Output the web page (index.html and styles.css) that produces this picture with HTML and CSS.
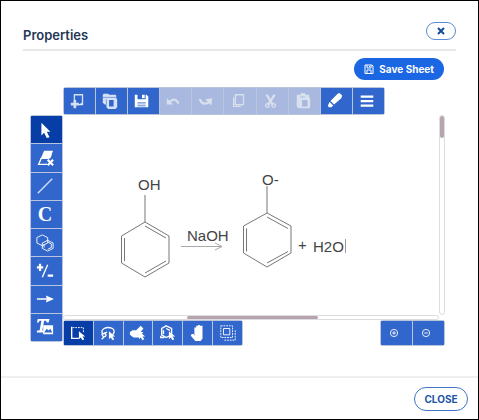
FILE: index.html
```html
<!DOCTYPE html>
<html lang="en">
<head>
<meta charset="utf-8">
<meta name="viewport" content="width=device-width, initial-scale=1">
<title>Properties</title>
<link rel="stylesheet" href="styles.css">
</head>
<body>
<section class="dialog" role="dialog" aria-labelledby="title">
  <header class="header">
    <h1 class="title" id="title">Properties</h1>
    <button class="dismiss" type="button" aria-label="Dismiss"><svg viewBox="0 0 8 8"><path d="M1 1l6 6M7 1L1 7"/></svg></button>
  </header>
  <main class="content">
    <div class="actions">
      <button class="save" type="button">
        <svg viewBox="0 0 10 10"><path d="M1 1h7l1 1v7.500H1zM3 1v3h4V1M3 9V6h4v3M5.500 2v1"/></svg>
        Save Sheet
      </button>
    </div>
    <div class="editor">
      <div class="bar top-bar">
        <button type="button" aria-label="New"><svg viewBox="0 0 20 20"><path class="line soft" d="M6 9V3h9v11h-4"/><path class="fill soft" d="M10.500 14h4v-2zM5 9h3v3h3v3H8v3H5v-3H2v-3h3z"/></svg></button>
        <button type="button" aria-label="Open"><svg viewBox="0 0 20 20"><path class="fill soft" d="M2 3l1-1h5l1 1h7l1 1v3l1 1v9l-2 2H8l-2-2v-3H4l-2-2z"/><path class="cut" d="M9 9h5v7H9z"/><path class="crease" d="M2 6h15M6 8v6"/></svg></button>
        <button type="button" aria-label="Save"><svg viewBox="0 0 20 20"><path class="fill" d="M2 3h3v5h9V3h1l2 2v12H2z"/><path class="fill" d="M10 3h3v4h-3z"/><path class="tint" d="M5 11h9v5H5z"/><path class="thin" d="M5 13.500h9"/></svg></button>
        <button type="button" aria-label="Undo" disabled><svg viewBox="0 0 20 20"><path class="thick" d="M5 11c4-4 8-3 10 2"/><path class="fill" d="M2 7v7h7z"/></svg></button>
        <button type="button" aria-label="Redo" disabled><svg viewBox="0 0 20 20"><path class="thick" d="M3 8c2 6 7 6 11 3"/><path class="fill" d="M9 8l8-1-1 8z"/></svg></button>
        <button type="button" aria-label="Copy" disabled><svg viewBox="0 0 20 20"><path class="line" d="M6 3h9v11H6zM4 6v10h8"/></svg></button>
        <button type="button" aria-label="Cut" disabled><svg viewBox="0 0 20 20"><path class="thick" d="M5 3l7 11M14 3L7 14"/><circle class="line" cx="6" cy="15" r="2"/><circle class="line" cx="13" cy="15" r="2"/></svg></button>
        <button type="button" aria-label="Paste" disabled><svg viewBox="0 0 20 20"><path class="fill" d="M3 4l1-1h3l1-2h4l1 2h3l1 1v2l1 1v10l-1 1H5l-2-2z"/><path class="cut" d="M9 9h6v7H9zM7 5h5v1H7z"/></svg></button>
        <button type="button" aria-label="Clean up"><svg viewBox="0 0 20 20"><path class="fill" d="M13 2l2-1 3 3-1 3-8 7-4-4zM4 11l4 4-2 2H3l-1-2z"/></svg></button>
        <button type="button" aria-label="Menu"><svg viewBox="0 0 20 20"><path class="thick" d="M3 5h14M3 10h14M3 15h14"/></svg></button>
      </div>
      <div class="bar side-bar">
        <button class="on" type="button" aria-label="Select"><svg viewBox="0 0 20 20"><path class="fill" d="M6 2v14l3-3 3 6 3-1-3-6h4z"/></svg></button>
        <button type="button" aria-label="Erase"><svg viewBox="0 0 20 20"><path class="fill" d="M9 2h10l-4 9H5z"/><path class="line" d="M6 10l-3 7h9l5-11"/><path class="halo" d="M13 12l6 6M19 12l-6 6"/><path class="thick" d="M13 12l6 6M19 12l-6 6"/></svg></button>
        <button type="button" aria-label="Bond"><svg viewBox="0 0 20 20"><path class="line soft" d="M2 18L18 2"/></svg></button>
        <button class="letter" type="button">C</button>
        <button type="button" aria-label="Rings"><svg viewBox="0 0 20 20"><path class="thin" d="M7 1l6 3v6l-6 3-6-3V4zM13 7l6 3v6l-6 3-6-3v-6zM13 9l4 2v4l-4 2M9 11v4"/></svg></button>
        <button type="button" aria-label="Charge"><svg viewBox="0 0 20 20"><path class="thick" d="M1 6h7M4.500 2v8M13 15h6"/><path class="line" d="M13 3L7 17"/></svg></button>
        <button type="button" aria-label="Arrow"><svg viewBox="0 0 20 20"><path class="line" d="M1 10h12"/><path class="fill" d="M11 6l9 4-9 4 1-4z"/></svg></button>
        <button type="button" aria-label="Text and image"><svg viewBox="0 0 20 20"><path class="fill" d="M2 1h13l-1 4h-2l-1-2H9L7 14h2v2H1v-2h3L6 3H4L3 5H1zM8 8h11v10H8z"/><path class="cut" d="M9 16l3-4 2 2 2-2 2 4H9z"/></svg></button>
      </div>
      <div class="canvas">
        <svg viewBox="63 115 376 200" role="img" aria-label="Phenol and sodium hydroxide give phenoxide and water">
          <g class="bonds">
            <path d="M145 195v27l24 14v27l-24 14-23.500-14v-27L145 222M145 226l21 12M166 261l-21 12M124.500 238v23"/>
            <path d="M267 186v27l24 13v27l-24 14-23.500-14v-27L267 213M267 217l21 11.500M288 251.500L267 263M246.500 228.500v23"/>
            <path class="reaction" d="M181 246.500h40M215 243l7 3.500-7 3.500"/>
            <path class="caret" d="M345.500 239v14"/>
          </g>
          <g class="atoms">
            <text x="138" y="190">OH</text>
            <text x="187" y="241">NaOH</text>
            <text x="262" y="185">O-</text>
            <text x="298" y="250">+</text>
            <text x="313" y="252">H2O</text>
          </g>
        </svg>
      </div>
      <div class="track vertical"><span class="thumb"></span></div>
      <div class="track horizontal"><span class="thumb"></span></div>
      <div class="bottom">
        <div class="bar modes">
          <button class="on" type="button" aria-label="Rectangle selection"><svg viewBox="0 0 20 20"><path class="dash" d="M4 4h12v6"/><path class="line" d="M3 3v13h8"/><path class="fill" d="M11 8v9l2-2 2 3 2-1-2-3h3z"/></svg></button>
          <button type="button" aria-label="Lasso selection"><svg viewBox="0 0 20 20"><path class="line" d="M4 11C1 6 8 2 15 5c3 2 2 5 0 7M4 11c4-2 5 3 2 3s-3-4-2-3l5-2M6 14l-3 3"/><path class="fill" d="M11 8v9l2-2 2 3 2-1-2-3h3z"/></svg></button>
          <button type="button" aria-label="Molecule selection"><svg viewBox="0 0 20 20"><path class="fill" d="M1 9l3-2 4 0 5-5 3 3-3 4 3 0-5 6H5l-4-3z"/><path class="fill" d="M11 8v9l2-2 2 3 2-1-2-3h3z"/></svg></button>
          <button type="button" aria-label="Ring selection"><svg viewBox="0 0 20 20"><path class="line" d="M8 2l6 3v7l-6 3-5-3V5zM8 5l4 2M5 7v4M2 13v2h4"/><path class="fill" d="M11 8v9l2-2 2 3 2-1-2-3h3z"/></svg></button>
          <button type="button" aria-label="Pan"><svg viewBox="0 0 20 20"><path class="fill" d="M6 11V4h2v5-7h2v7-8h2v8-7h3v14l-2 3H7l-5-6 1-2h2l2 2z"/></svg></button>
          <button type="button" aria-label="Select all"><svg viewBox="0 0 20 20"><path class="dash" d="M2 2h13v13H2zM6 18h12V6"/><path class="thin" d="M5 5h7v7H5z"/></svg></button>
        </div>
        <div class="bar zoom">
          <button type="button" aria-label="Zoom in"><svg viewBox="0 0 20 20"><circle class="thin" cx="10" cy="10" r="4"/><path class="thin" d="M8 10h4M10 8v4"/></svg></button>
          <button type="button" aria-label="Zoom out"><svg viewBox="0 0 20 20"><circle class="thin" cx="10" cy="10" r="4"/><path class="thin" d="M8 10h4"/></svg></button>
        </div>
      </div>
    </div>
  </main>
  <footer class="footer"><button class="close" type="button">CLOSE</button></footer>
</section>
</body>
</html>
```
FILE: styles.css
```css
* { box-sizing: border-box; }

body {
  margin: 0;
  font-family: Inter, sans-serif;
  background: #fff;
}

button {
  margin: 0;
  padding: 0;
  border: 0;
  font: inherit;
}

svg { display: block; }

.dialog {
  display: flex;
  flex-direction: column;
  min-height: 100vh;
  border: 1px solid #000;
}

.header {
  display: flex;
  justify-content: space-between;
  align-items: flex-start;
  height: 30px;
  margin: 20px 22px 0;
  border-bottom: 2px solid #e8e8e8;
}

.title {
  margin: 4px 0 0;
  font-size: 13px;
  font-weight: 600;
  line-height: 20px;
  color: #263755;
}

.dismiss {
  display: grid;
  place-items: center;
  width: 30px;
  height: 18px;
  margin-top: 1px;
  border: 1px solid #5b8bd0;
  border-radius: 9px;
  background: #fff;
}

.dismiss svg {
  width: 8px;
  height: 8px;
  stroke: #124a9c;
  stroke-width: 2;
}

.content {
  flex: 1;
  padding: 7px 33px 0 29px;
}

.actions {
  display: flex;
  justify-content: flex-end;
  padding-right: 1px;
}

.save {
  display: flex;
  align-items: center;
  justify-content: center;
  gap: 5px;
  height: 22px;
  padding: 0 10px;
  border-radius: 11px;
  background: #1a66e3;
  color: #fff;
  font-size: 10px;
  font-weight: 700;
}

.save svg {
  width: 10px;
  height: 10px;
  fill: none;
  stroke: #fff;
}

.editor {
  display: grid;
  grid-template-columns: 33px 1fr 6px;
  grid-template-rows: 28px auto 5px 26px;
  margin-top: 7px;
}

.bar {
  display: flex;
  gap: 1px;
  padding: 1px;
  border-radius: 3px;
  background: #bac5dc;
  overflow: hidden;
}

.bar button {
  display: grid;
  place-items: center;
  flex: 1;
  background: #3166cc;
  color: #fff;
}

.bar button.on { background: #073da7; }

.bar button:disabled {
  background: #a8b8df;
  color: #d8dfed;
}

.bar svg {
  width: 18px;
  height: 18px;
  fill: none;
}

.bar .fill { fill: currentColor; }
.bar .line { stroke: currentColor; stroke-width: 1.5; }
.bar .thin { stroke: currentColor; }
.bar .thick { stroke: currentColor; stroke-width: 2.5; }
.bar .dash { stroke: currentColor; stroke-dasharray: 2 1; }
.bar .cut { fill: #3166cc; }
.bar .crease { stroke: #3166cc; stroke-width: 1; opacity: .6; }
.bar .tint { fill: #8eabe3; }
.bar .halo { stroke: #3166cc; stroke-width: 5; }
.bar .soft { opacity: .8; }
.bar :disabled .cut { fill: #a8b8df; }

.top-bar {
  grid-column: 2;
  justify-self: start;
  width: 322px;
}

.top-bar button { padding-right: 3px; }

.side-bar {
  grid-column: 1;
  grid-row: 2 / 5;
  flex-direction: column;
  margin-bottom: 4px;
}

.side-bar button { padding-right: 3px; }

.bar .letter {
  font: 700 20px/20px "Liberation Serif", serif;
}

.canvas {
  grid-column: 2;
  grid-row: 2;
}

.canvas svg { width: 100%; }

.bonds {
  fill: none;
  stroke: #777;
}

.bonds .reaction { stroke: #aaa; }
.bonds .caret { stroke: #999; }

.atoms {
  fill: #444;
  font: 15px "Liberation Sans", sans-serif;
}

.track {
  display: flex;
  border: 1px solid #ddd;
  border-radius: 3px;
}

.thumb {
  border-radius: 3px;
  background: #b6a5b0;
}

.vertical {
  grid-column: 3;
  grid-row: 2;
  flex-direction: column;
}

.vertical .thumb { height: 11%; }

.horizontal {
  grid-column: 2;
  grid-row: 3;
}

.horizontal .thumb {
  width: 35%;
  margin-left: 33%;
}

.bottom {
  grid-column: 2 / 4;
  grid-row: 4;
  display: flex;
  justify-content: space-between;
}

.modes { width: 180px; }
.zoom { width: 65px; }
.zoom button { padding-right: 6px; }

.footer {
  display: flex;
  justify-content: flex-end;
  padding: 9px 10px 8px;
  border-top: 2px solid #efefef;
}

.close {
  width: 54px;
  height: 24px;
  border: 1px solid #3c76c5;
  border-radius: 12px;
  background: #fff;
  color: #2054a4;
  font-size: 10px;
  font-weight: 700;
}
```
